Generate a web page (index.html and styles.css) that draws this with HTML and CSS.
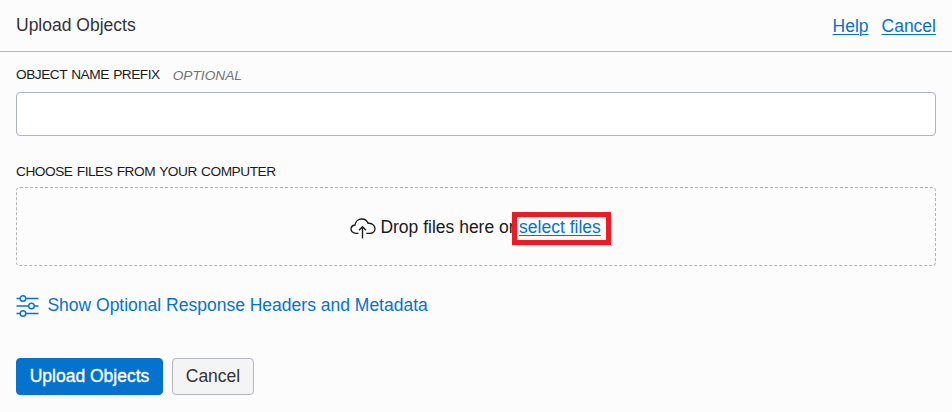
FILE: index.html
```html
<!DOCTYPE html>
<html lang="en">
<head>
<meta charset="utf-8">
<title>Upload Objects</title>
<link rel="stylesheet" href="styles.css">
</head>
<body>
<header class="header">
  <h1 class="title">Upload Objects</h1>
  <nav class="links"><a href="#">Help</a><a href="#">Cancel</a></nav>
</header>
<main class="content">
  <label class="label" for="prefix">OBJECT NAME PREFIX <em class="optional">OPTIONAL</em></label>
  <input class="input" id="prefix" type="text">
  <div class="label label-files">CHOOSE FILES FROM YOUR COMPUTER</div>
  <div class="dropzone">
    <svg class="cloud" width="26" height="21" viewBox="0 0 26 21" fill="none" stroke="currentColor" stroke-width="1.35">
      <path d="M8.5 15.3H5.8C3.2 15.3 1 13.5 1 11.1C1 8.9 2.6 7.4 5 7C5.4 3.6 8.2 1 11.8 1C14.8 1 17.1 2.6 18.1 5.3C21.3 5 25 7 25 10.5C25 13.3 22.8 15.3 20 15.3H16.3"/>
      <path d="M12.5 20.5V9M9 12.2L12.5 8.7L16 12.2"/>
    </svg>
    <span class="drop-text">Drop files here or</span>
    <span class="highlight"><a href="#">select files</a></span>
  </div>
  <a class="options" href="#">
    <svg width="23" height="22" viewBox="0 0 23 22" fill="none" stroke="currentColor" stroke-width="1.4">
      <path d="M0.5 3.5H4M10 3.5H22.5M0.5 11H12.5M18.5 11H22.5M0.5 18.5H4M10 18.5H22.5"/>
      <circle cx="7" cy="3.5" r="2.8"/><circle cx="15.5" cy="11" r="2.8"/><circle cx="7" cy="18.5" r="2.8"/>
    </svg>
    <span>Show Optional Response Headers and Metadata</span>
  </a>
  <div class="actions">
    <button class="button primary">Upload Objects</button>
    <button class="button">Cancel</button>
  </div>
</main>
</body>
</html>
```
FILE: styles.css
```css
* { box-sizing: border-box; }
body {
  margin: 0;
  height: 412px;
  background: #fcfcfc;
  color: #1a1a1a;
  font: 17.5px/20px "Liberation Sans", Arial, sans-serif;
}
a { color: #0572ce; text-underline-offset: 2px; text-decoration-thickness: 1px; }
.header {
  display: flex;
  justify-content: space-between;
  height: 52px;
  padding: 15px 16px 0;
  border-bottom: 1px solid #b3b7bf;
}
.title { margin: 0; font-size: 17.5px; font-weight: 400; color: #333; }
.links { display: flex; gap: 13px; padding-top: 1px; }
.content { padding: 15px 16px 0; }
.label { display: flex; height: 16px; font-size: 13.7px; line-height: 16px; letter-spacing: -.48px; word-spacing: 1px; }
.optional { margin: 1px 0 0 13px; font-size: 13.7px; letter-spacing: 0; color: #737373; }
.input {
  display: block;
  width: 100%;
  height: 44px;
  margin-top: 9px;
  border: 1px solid #aeb4be;
  border-radius: 4px;
  background: #fff;
}
.label-files { margin-top: 28px; }
.dropzone {
  display: flex;
  align-items: center;
  justify-content: center;
  height: 79px;
  margin-top: 7px;
  padding-left: 9px;
  border: 1px dashed #b0b3b8;
  border-radius: 4px;
}
.cloud { flex: none; margin: 3px 4px 0 0; }
.highlight {
  z-index: 1;
  width: 99px;
  height: 33px;
  margin: 4px 0 0 -3px;
  padding-left: 2.5px;
  border: 5px solid #ed1c24;
  background: #fcfcfc;
}
.options { display: flex; align-items: center; gap: 8.4px; height: 22px; margin-top: 29px; text-decoration: none; }
.options span { margin-top: -2px; }
.actions { display: flex; gap: 9px; margin-top: 41px; }
.button {
  width: 82px;
  height: 37px;
  padding: 0 0 2px;
  border: 1px solid #b3b7bf;
  border-radius: 4px;
  background: #f4f4f4;
  color: #333;
  font: inherit;
}
.primary { width: 147px; border-color: #0572ce; background: #0572ce; color: #fff; -webkit-text-stroke: .35px #fff; }
```
